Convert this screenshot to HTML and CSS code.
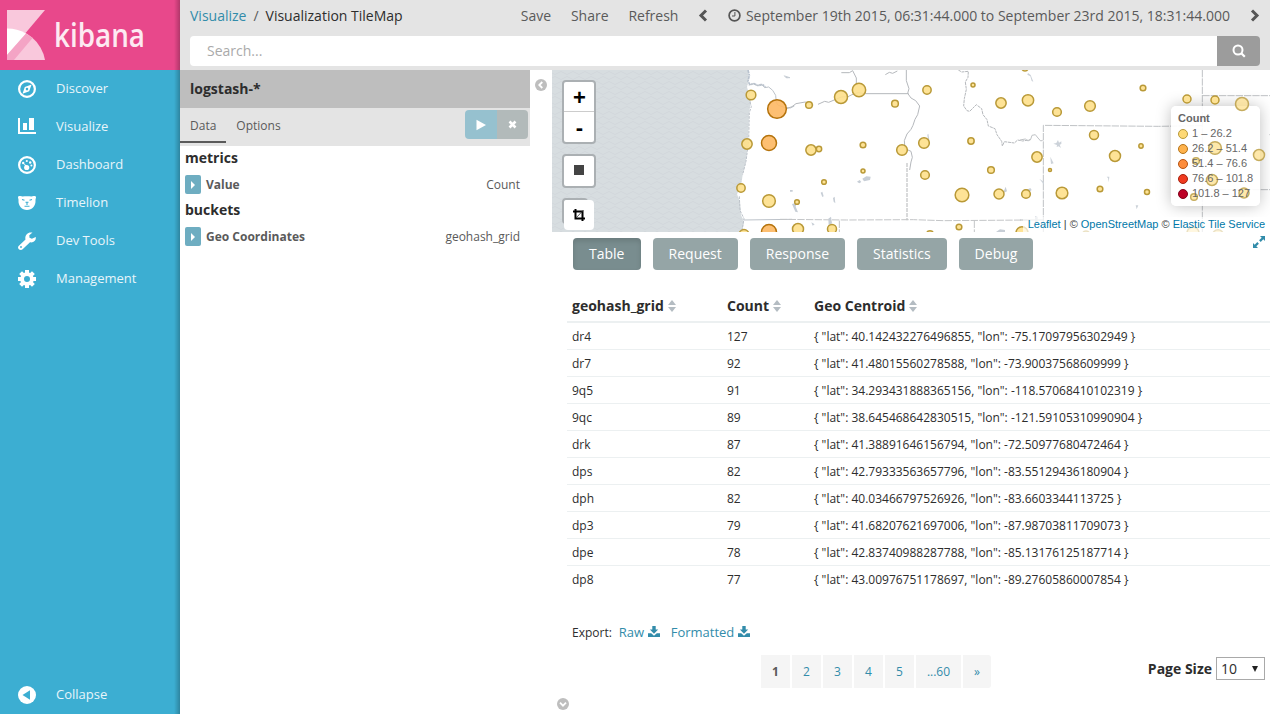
FILE: index.html
```html
<!DOCTYPE html>
<html lang="en">
<head>
<meta charset="utf-8">
<title>Visualization TileMap - Kibana</title>
<link rel="stylesheet" href="styles.css">
</head>
<body>
<div class="app">
  <nav class="sidebar">
    <div class="brand">
      <svg width="180" height="70" viewBox="0 0 180 70">
        <path d="M7 10H45L7 55Z" fill="#f9c8dc"/>
        <path d="M7 28.500a38 38 0 0 1 38 31.500H7Z" fill="#f9c8dc"/>
        <path d="M7 28.500a38 38 0 0 1 19 5L7 55Z" fill="#fff"/>
        <path d="M26 33.500l6.500 4.500L14 60H7v-5Z" fill="#f4a4c5"/>
        <text class="brand-name" x="54" y="46.500" textLength="91" lengthAdjust="spacingAndGlyphs">kibana</text>
      </svg>
    </div>
    <ul class="menu">
      <li><svg width="18" height="18" viewBox="0 0 18 18"><circle cx="9" cy="9" r="7.900" fill="none" stroke="#fff" stroke-width="2.200"/><path fill-rule="evenodd" fill="#fff" d="M13.600 4.500l-2.400 6.700-6.700 2.500 2.300-6.800zM9 7.800a1.300 1.300 0 1 0 .01 2.600A1.300 1.300 0 0 0 9 7.800z"/></svg><span>Discover</span></li>
      <li><svg width="18" height="18" viewBox="0 0 18 18"><path fill="#fff" d="M0 0h2v14h16v2H0zM5 5h4v7H5zM11 0h5v12h-5z"/></svg><span>Visualize</span></li>
      <li><svg width="18" height="18" viewBox="0 0 18 18"><circle cx="9" cy="9" r="7.900" fill="none" stroke="#fff" stroke-width="2.200"/><g fill="#fff"><circle cx="8.700" cy="11.500" r="2.600"/><circle cx="5.200" cy="7" r="1.200"/><circle cx="8.800" cy="5" r="1.100"/><circle cx="12.200" cy="6.500" r="1.200"/><circle cx="13.400" cy="9.600" r="1"/><path d="M5 6.500l4.500 4-1.500 1z"/></g></svg><span>Dashboard</span></li>
      <li><svg width="18" height="18" viewBox="0 0 18 18"><path fill="#fff" d="M0 3C0 1.700 3.500 1.600 4.500 2.600 7 2.200 11 2.200 13.500 2.600 14.500 1.600 18 1.700 18 3c0 1.300-.5 2-.5 3 .5 6-3.500 10-8.500 10S0 12 .5 6C.5 5 0 4.300 0 3z"/><path d="M4 5.500l2.500.7M14 5.500l-2.500.7M7.500 8.300h3M9 8.500v2.500M6.500 12.300h5" fill="none" stroke="#3caed2" stroke-width="1.100"/></svg><span>Timelion</span></li>
      <li><svg width="18" height="18" viewBox="0 0 18 18"><path fill="#fff" fill-rule="evenodd" d="M14.500.6L11.300 3.200l.2 2.500 2.400 1L17.700 5c.8 3-1.700 6-5.700 5.300L4.900 17.100c-1.600 1.700-4.400.8-4.800-1.100-.2-1 .1-1.700.8-2.300L7.500 7.500C6.500 3.500 9.500-.5 14.500.6zM3 14.100a.9.9 0 1 0 .01 1.800A.9.9 0 0 0 3 14.100z"/></svg><span>Dev Tools</span></li>
      <li><svg width="18" height="18" viewBox="0 0 18 18"><g stroke="#fff" stroke-width="4"><path d="M9 0v4M9 14v4M0 9h4M14 9h4M2.600 2.600l2.900 2.900M12.500 12.500l2.900 2.900M15.400 2.600l-2.900 2.900M5.500 12.500l-2.900 2.900"/></g><circle cx="9" cy="9" r="4.900" fill="none" stroke="#fff" stroke-width="3.800"/></svg><span>Management</span></li>
    </ul>
    <div class="collapse"><svg width="18" height="18" viewBox="0 0 18 18"><circle cx="9" cy="9" r="9" fill="#fff"/><path d="M4.500 9L12 4.300v9.400z" fill="#3caed2"/></svg><span>Collapse</span></div>
  </nav>

  <main class="main">
    <header class="topbar">
      <div class="topline">
        <div class="crumbs"><a>Visualize</a><i>/</i><b>Visualization TileMap</b></div>
        <div class="actions"><span>Save</span><span>Share</span><span>Refresh</span></div>
        <svg class="prev" width="10" height="13" viewBox="0 0 10 13"><path d="M8 1.500L3 6.500l5 5" fill="none" stroke="#555" stroke-width="3"/></svg>
        <svg class="clock" width="13" height="13" viewBox="0 0 13 13"><circle cx="6.500" cy="6.500" r="5.400" fill="none" stroke="#555" stroke-width="1.700"/><path d="M6.900 3v4H4" fill="none" stroke="#555"/></svg>
        <span class="range">September 19th 2015, 06:31:44.000 to September 23rd 2015, 18:31:44.000</span>
        <svg class="next" width="10" height="13" viewBox="0 0 10 13"><path d="M2 1.500l5 5-5 5" fill="none" stroke="#555" stroke-width="3"/></svg>
      </div>
      <div class="search"><div class="search-box">Search...</div><div class="search-btn"><svg width="14" height="14" viewBox="0 0 14 14"><circle cx="6" cy="6" r="4.500" fill="none" stroke="#fff" stroke-width="2"/><path d="M9 9l3.800 3.800" stroke="#fff" stroke-width="2.200"/></svg></div></div>
    </header>

    <div class="content">
      <aside class="config">
        <div class="index-name">logstash-*</div>
        <div class="tabs">
          <span class="tab active">Data</span><span class="tab">Options</span>
          <div class="apply"><span class="go"><svg width="10" height="12" viewBox="0 0 10 12"><path d="M.5.700v10.600L10 6z" fill="#fff"/></svg></span><span class="cancel"><svg width="9" height="9" viewBox="0 0 9 9"><path d="M1.500 1.500l6 6M7.500 1.500l-6 6" stroke="#fff" stroke-width="2.600"/></svg></span></div>
        </div>
        <h2>metrics</h2>
        <div class="agg"><i class="toggle"><svg width="4" height="8" viewBox="0 0 4 8"><path d="M0 0v8l4-4z" fill="#fff"/></svg></i><b>Value</b><span>Count</span></div>
        <h2>buckets</h2>
        <div class="agg"><i class="toggle"><svg width="4" height="8" viewBox="0 0 4 8"><path d="M0 0v8l4-4z" fill="#fff"/></svg></i><b>Geo Coordinates</b><span>geohash_grid</span></div>
      </aside>
      <div class="gutter"><svg width="12" height="12" viewBox="0 0 12 12"><circle cx="6" cy="6" r="6" fill="#bebebe"/><path d="M7.300 3L4.300 6l3 3" fill="none" stroke="#fff" stroke-width="1.800"/></svg></div>

      <section class="vis">
        <div class="map">
          <svg class="tiles" width="718" height="162" viewBox="0 0 718 162">
            <defs><pattern id="waves" width="12" height="10" patternUnits="userSpaceOnUse"><path d="M0 3q3 3 6 0t6 0M-6 8q3 3 6 0t6 0 6 0" fill="none" stroke="#d0d6da" stroke-width=".8"/></pattern></defs>
            <path d="M0 0h196l1 8-2 9 4 14-2 12-1 30-2 18-3 12-2 12-4 9 3 8 1 13 3 7-2 10H0z" fill="#d7dde0"/>
            <path d="M0 0h196l1 8-2 9 4 14-2 12-1 30-2 18-3 12-2 12-4 9 3 8 1 13 3 7-2 10H0z" fill="url(#waves)"/>
            <g transform="translate(0 -2) scale(.333333)" fill="none" stroke="#bcc2c9" stroke-width="3">
              <path d="M588 6l4 16-4 18 6 10 12-3 14 6 12-4 8 8" stroke="#b8c2ce" stroke-width="5" stroke-dasharray="10 2 5 2"/>
              <path d="M594 70l-4 18 8 28-6 18-2 86-8 60-10 40M562 385l2 42 12 25-6 36" stroke-dasharray="8 3"/>
              <path d="M590 51l14-4 12 6 12-5 10 11 12-2 12 10 9 15 2 22 6 8 18 6 18 2 12-6M575 456l145-2M697 23l5 6h12"/>
            </g>
            <g transform="translate(228 -2) scale(.333333)" fill="none" stroke="#b5b8bc" stroke-width="3">
              <path d="M20 122l16-6 12-9 28-5 12 7 12 2M114 109l20-9 12 3 38-16 20-1 12-6 18-6 22 3h130M184 14h24l10-6 11 22v20M316 20l12-7 10 3 14-7M379 6v32l8 24-4 14 10 14 14 8 12 16-6 26-8 14-6 18-6 12-12 14-8 20 2 24 18 8 4 18-4 14-4 24"/>
              <path d="M381 285v172" stroke="#c6c8ca" stroke-width="4" stroke-dasharray="12 3"/>
              <path d="M0 454l200 2 200-1 90 3 260-2M178 458v38M583 458v38" stroke="#c3c5c7" stroke-dasharray="22 4"/>
              <path d="M535 6l10 6 20-2-1 18-8 14 3 22-6 28-2 22 10 14 8 2 20-20 16 12 4 18 12 15 4 19 20 8 6 18 14 20 2 14 6-13 30 4 10-9 15 3 24-4" stroke-dasharray="9 2"/>
              <g fill="#c7ced6" stroke="none"><path d="M247 332l12-7 13 1-2 10-18 4zM231 341l8-5 5 6-6 4zM159 390l5-4 2 20-5-5zM122 374l5-3 4 14-4 2zM36 408l14-4-3 12 7 17-8-2zM145 452l8-6 3 20-10 6zM30 366h8v5h-8zM669 376l8-20 4 14zM442 200l3-3 3 20h-4zM94 463l10 6-6 4zM648 492l12-8 15 2v6zM12 22l18 6-8 3z"/></g>
            </g>
            <g transform="translate(468 -2) scale(.333333)" fill="none" stroke="#bfc2c5" stroke-width="3">
              <path d="M70 492V172l345 3 132-2M547 6v486M547 83h203M547 365h203M0 456h70M748 200h2" stroke-dasharray="22 3"/>
              <path d="M0 216l16-3 8 6 8-5 4-12 10-2 8 10 8 9 6-2"/>
              <g fill="#ccd2d9" stroke="none"><path d="M24 15l8 6 8 20-5-2-4-14-9-5zM100 227l9-2 5-9 3 8 7-4v8l-5 2 4 10-7-5-6 2 1-6zM91 266l6 12 4 8-8 2zM58 332l14 10v8zM260 326h8l-2 17-2-13zM347 412h8l-5 12zM45 445l8 2v20l-8-5zM19 366l12-6 4 6-10 9z"/></g>
            </g>
          </svg>
          <div class="legend-back"></div>
          <svg class="markers" width="718" height="162" viewBox="0 0 718 162">
            <g transform="translate(0 -2) scale(.333333)">
              <circle cx="597" cy="81" r="14.500"/><circle cx="585" cy="228" r="15.500"/><circle cx="567" cy="360" r="12.500"/><circle cx="651" cy="399" r="19"/><circle cx="576" cy="499" r="14.500"/>
              <circle class="warm" cx="675" cy="123" r="28"/><circle class="warm" cx="651" cy="225" r="22.500"/><circle class="warm" cx="651" cy="492" r="22.500"/>
            </g>
            <g transform="translate(228 -2) scale(.333333)">
              <circle cx="87" cy="111" r="10"/><circle cx="183" cy="87" r="19.500"/><circle cx="237" cy="66" r="20"/><circle cx="345" cy="107" r="10"/><circle cx="441" cy="66" r="12.500"/><circle cx="579" cy="51" r="6"/><circle cx="663" cy="105" r="15.500"/><circle cx="744" cy="97" r="17"/>
              <circle cx="93" cy="246" r="15.500"/><circle cx="117" cy="243" r="8"/><circle cx="249" cy="231" r="8.500"/><circle cx="366" cy="246" r="16"/><circle cx="432" cy="225" r="16"/><circle cx="573" cy="219" r="9.500"/><circle cx="249" cy="309" r="6"/><circle cx="435" cy="321" r="13"/><circle cx="132" cy="342" r="7"/><circle cx="633" cy="306" r="10"/>
              <circle cx="51" cy="402" r="7"/><circle cx="546" cy="381" r="20.500"/><circle cx="657" cy="378" r="15"/><circle cx="738" cy="378" r="13"/><circle cx="54" cy="483" r="16.500"/><circle cx="156" cy="483" r="13.500"/><circle cx="537" cy="477" r="8.500"/><circle cx="450" cy="498" r="10"/><circle cx="726" cy="494" r="18"/><circle cx="735" cy="0" r="9"/>
            </g>
            <g transform="translate(468 -2) scale(.333333)">
              <circle cx="111" cy="132" r="13"/><circle cx="210" cy="114" r="16"/><circle cx="369" cy="60" r="8.500"/><circle cx="501" cy="93" r="12"/><circle cx="585" cy="96" r="12"/><circle class="dim" cx="666" cy="108" r="19.500"/><circle cx="222" cy="201" r="13.500"/><circle cx="51" cy="267" r="15.500"/><circle cx="285" cy="264" r="16.500"/><circle cx="363" cy="234" r="6.500"/><circle cx="90" cy="306" r="4.500"/><circle cx="126" cy="375" r="17.500"/><circle cx="240" cy="363" r="8.500"/><circle cx="381" cy="372" r="7.500"/>
              <circle class="dim" cx="585" cy="240" r="19"/><circle class="dim" cx="528" cy="279" r="10"/><circle class="dim" cx="717" cy="261" r="16.500"/><circle class="dim" cx="576" cy="336" r="16.500"/><circle class="dim" cx="522" cy="387" r="10"/><circle class="dim" cx="672" cy="375" r="15"/><circle cx="519" cy="495" r="18"/><circle cx="594" cy="501" r="16"/><circle cx="198" cy="499" r="10"/>
            </g>
          </svg>
          <div class="legend">
            <b>Count</b>
            <div><i class="dot c1"></i>1 – 26.2</div>
            <div><i class="dot c2"></i>26.2 – 51.4</div>
            <div><i class="dot c3"></i>51.4 – 76.6</div>
            <div><i class="dot c4"></i>76.6 – 101.8</div>
            <div><i class="dot c5"></i>101.8 – 127</div>
          </div>
          <div class="controls">
            <div class="control zoomer"><span>+</span><span>-</span></div>
            <div class="control"><i class="square"></i></div>
            <div class="control clipped"><span><svg width="12" height="12" viewBox="0 0 12 12"><path d="M2.500 0v9.500H12M0 2.500h9.500V12" fill="none" stroke="#000" stroke-width="2"/><path d="M3 9l7.500-8" stroke="#333" stroke-width=".8"/></svg></span></div>
          </div>
          <div class="attribution"><a>Leaflet</a> | © <a>OpenStreetMap</a> © <a>Elastic Tile Service</a></div>
        </div>

        <div class="spy">
          <div class="modes"><span class="on">Table</span><span>Request</span><span>Response</span><span>Statistics</span><span>Debug</span></div>
          <svg class="expand" width="12" height="12" viewBox="0 0 12 12"><path d="M7 0h5v5l-1.700-1.700L7.700 5.900 6.100 4.300l2.600-2.600zM5 12H0V7l1.700 1.700 2.600-2.600 1.600 1.600-2.600 2.600z" fill="#328caa"/></svg>
        </div>

        <table class="grid">
          <colgroup><col class="w1"><col class="w2"><col></colgroup>
          <thead><tr><th>geohash_grid<i class="sort"></i></th><th>Count<i class="sort"></i></th><th>Geo Centroid<i class="sort"></i></th></tr></thead>
          <tbody>
            <tr><td>dr4</td><td>127</td><td>{ "lat": 40.142432276496855, "lon": -75.17097956302949 }</td></tr>
            <tr><td>dr7</td><td>92</td><td>{ "lat": 41.48015560278588, "lon": -73.90037568609999 }</td></tr>
            <tr><td>9q5</td><td>91</td><td>{ "lat": 34.293431888365156, "lon": -118.57068410102319 }</td></tr>
            <tr><td>9qc</td><td>89</td><td>{ "lat": 38.645468642830515, "lon": -121.59105310990904 }</td></tr>
            <tr><td>drk</td><td>87</td><td>{ "lat": 41.38891646156794, "lon": -72.50977680472464 }</td></tr>
            <tr><td>dps</td><td>82</td><td>{ "lat": 42.79333563657796, "lon": -83.55129436180904 }</td></tr>
            <tr><td>dph</td><td>82</td><td>{ "lat": 40.03466797526926, "lon": -83.6603344113725 }</td></tr>
            <tr><td>dp3</td><td>79</td><td>{ "lat": 41.68207621697006, "lon": -87.98703811709073 }</td></tr>
            <tr><td>dpe</td><td>78</td><td>{ "lat": 42.83740988287788, "lon": -85.13176125187714 }</td></tr>
            <tr><td>dp8</td><td>77</td><td>{ "lat": 43.00976751178697, "lon": -89.27605860007854 }</td></tr>
          </tbody>
        </table>

        <div class="export">Export:
          <a>Raw<svg width="12" height="12" viewBox="0 0 12 12"><path fill="#328caa" d="M4.300 0h3.400v3.500H10.200L6 7.700 1.800 3.500h2.500zM0 7.200h3.200L6 9.800l2.800-2.600H12V11H0z"/></svg></a>
          <a>Formatted<svg width="12" height="12" viewBox="0 0 12 12"><path fill="#328caa" d="M4.300 0h3.400v3.500H10.200L6 7.700 1.800 3.500h2.500zM0 7.200h3.200L6 9.800l2.800-2.600H12V11H0z"/></svg></a>
        </div>

        <div class="pager">
          <div class="pages"><b>1</b><a>2</a><a>3</a><a>4</a><a>5</a><a class="wide">...60</a><a class="last">»</a></div>
          <div class="size"><b>Page Size</b><div class="select"><span>10</span><svg width="6" height="6" viewBox="0 0 6 6"><path d="M0 0h6L3 6z" fill="#222"/></svg></div></div>
        </div>
        <div class="bottom"><svg width="12" height="12" viewBox="0 0 12 12"><circle cx="6" cy="6" r="6" fill="#bebebe"/><path d="M3 4.700l3 3 3-3" fill="none" stroke="#fff" stroke-width="1.800"/></svg></div>
      </section>
    </div>
  </main>
</div>
</body>
</html>
```

FILE: styles.css
```css
* { box-sizing: border-box; }
body { margin: 0; font: 13px/18px "Open Sans", sans-serif; color: #2d2d2d; background: #fff; }
svg { display: block; flex: none; }
a { color: #328caa; }
i { font-style: normal; }
.app { display: flex; width: 1270px; height: 714px; overflow: hidden; }

.sidebar { width: 180px; flex: none; display: flex; flex-direction: column; background: #3caed2; color: #e8f5fa; position: relative; }
.sidebar::after { content: ""; position: absolute; right: 0; top: 0; bottom: 0; width: 6px; background: linear-gradient(to right, rgba(0,0,0,0), rgba(0,0,0,.24)); }
.brand { height: 70px; background: #e8488b; }
.brand-name { font: 600 32px "Open Sans", sans-serif; fill: #fdeaf2; }
.menu { list-style: none; margin: 0; padding: 0; flex: 1; }
.menu li, .collapse { display: flex; align-items: center; gap: 20px; height: 38px; padding: 0 0 2px 18px; }
.menu span, .collapse span { margin-top: -1px; }
.menu svg, .collapse svg { margin-top: 1px; }
.collapse { height: 39px; padding-bottom: 0; }

.main { flex: 1; min-width: 0; display: flex; flex-direction: column; }
.topbar { height: 70px; background: #e4e4e4; padding: 0 10px; color: #5a5a5a; }
.topline { height: 36px; padding-bottom: 5px; display: flex; align-items: center; font-size: 14px; white-space: nowrap; }
.crumbs { width: 331px; flex: none; display: flex; }
.crumbs i { margin: 0 7px; }
.crumbs b { font-weight: 400; color: #2d2d2d; }
.actions { display: flex; gap: 20px; }
.actions span { margin-left: -.2px; }
.prev { margin-left: 20px; }
.clock { margin: 0 4.500px 0 20px; }
.next { margin: 0 0 0 20px; }
.search { display: flex; height: 30px; }
.search-box { flex: 1; background: #fff; border-radius: 4px 0 0 4px; font-size: 14px; line-height: 30px; padding-left: 17px; color: #aaa; }
.search-btn { width: 43px; background: #9c9c9c; border-radius: 0 4px 4px 0; display: flex; align-items: center; justify-content: center; }

.content { flex: 1; display: flex; min-height: 0; }
.config { width: 350px; flex: none; }
.index-name { height: 38px; background: #bebebe; padding-left: 10px; font: 700 14px/37px "Open Sans", sans-serif; }
.tabs { height: 38px; background: #e4e4e4; display: flex; font-size: 12px; color: #5a5a5a; padding-right: 2px; }
.tab { height: 35px; line-height: 35px; padding: 0 10px; }
.tab.active { border-bottom: 2px solid #5a5a5a; }
.apply { margin: 2px 0 0 auto; display: flex; height: 29px; border-radius: 4px; overflow: hidden; }
.go, .cancel { display: flex; align-items: center; justify-content: center; width: 32px; background: #96c1cf; }
.cancel { width: 31px; background: #b2baba; }
.config h2 { margin: 0; padding: 2px 5px 0; height: 26px; font-size: 14px; line-height: 20px; }
.agg { display: flex; align-items: center; height: 26px; padding: 0 10px 0 5px; font-size: 12px; color: #5a5a5a; }
.agg span { margin-left: auto; }
.toggle { width: 16px; height: 19px; background: #6eadc1; border-radius: 2px; margin: -1px 5px 0 0; display: flex; align-items: center; justify-content: center; }
.gutter { width: 22px; flex: none; padding: 9px 5px; }

.vis { flex: 1; min-width: 0; display: flex; flex-direction: column; }
.map { position: relative; height: 162px; flex: none; overflow: hidden; }
.markers { position: absolute; left: 0; top: 0; }
.markers circle { fill: #fee08b; fill-opacity: .9; stroke: #b99937; stroke-width: 4.500px; }
.markers .warm { fill: #fdb863; stroke: #b5730c; }
.markers .dim { opacity: .8; }
.legend, .legend-back { position: absolute; left: 619px; top: 36px; width: 89px; height: 100px; }
.legend-back { border-radius: 5px; background: rgba(255,255,255,.9); box-shadow: 0 0 15px rgba(0,0,0,.25); }
.legend { padding: 5px 7px; font: 11px/15px "Liberation Sans", Arial, sans-serif; color: #666; white-space: nowrap; }
.legend b { display: block; }
.legend div { display: flex; align-items: center; }
.dot { width: 10px; height: 10px; flex: none; border-radius: 50%; border: 1px solid; margin-right: 4px; }
.c1 { background: #fed976; border-color: #b99937; }
.c2 { background: #feb24c; border-color: #b57318; }
.c3 { background: #fd8d3c; border-color: #b65311; }
.c4 { background: #f03b20; border-color: #a5200d; }
.c5 { background: #bd0026; border-color: #80001a; }
.controls { position: absolute; left: 10px; top: 10px; display: flex; flex-direction: column; gap: 10px; }
.control { width: 34px; height: 34px; border: 2px solid #abb0b3; border-radius: 4px; background: #fff; display: flex; flex-direction: column; align-items: center; justify-content: center; }
.zoomer { height: 64px; font: 700 22px/31px "Liberation Sans", Arial, sans-serif; color: #000; }
.zoomer span { width: 30px; height: 30px; padding-left: 1px; text-align: center; }
.zoomer span:first-child { border-bottom: 1px solid #ccc; }
.square { width: 10px; height: 10px; background: #444; margin-bottom: 2px; }
.clipped { width: 26px; height: 26px; align-items: flex-start; justify-content: flex-start; }
.clipped span { width: 30px; height: 30px; flex: none; background: #fff; border-radius: 4px; display: flex; align-items: center; justify-content: center; }
.attribution { position: absolute; right: 0; bottom: 0; padding: 0 5px; background: rgba(255,255,255,.7); font: 11px/15px "Liberation Sans", Arial, sans-serif; color: #444; white-space: nowrap; }
.attribution a { color: #0078a8; }

.spy { height: 56px; flex: none; display: flex; justify-content: space-between; padding: 6px 5px 0 21px; }
.expand { margin-top: -2px; }
.modes { display: flex; gap: 12px; }
.modes span { height: 32px; padding: 0 16px; border-radius: 4px; background: #95a5a6; color: #fff; font-size: 14px; line-height: 32px; }
.modes .on { width: 67.600px; background: #798d8f; box-shadow: inset 0 3px 5px rgba(0,0,0,.125); }

.grid { width: 703px; margin-left: 15px; border-collapse: separate; border-spacing: 0; table-layout: fixed; flex: none; }
.w1 { width: 155px; }
.w2 { width: 87px; }
.grid th { height: 35px; padding: 3px 5px 0; text-align: left; font-size: 14px; line-height: 20px; border-bottom: 2px solid #ecf0f1; white-space: nowrap; }
.grid td { height: 27px; padding: 0 5px; font-size: 12px; line-height: 17px; border-bottom: 1px solid #ecf0f1; white-space: nowrap; }
.grid tbody tr:last-child td { border-bottom-color: transparent; }
.sort { display: inline-grid; gap: 2px; margin-left: 4px; vertical-align: 6px; }
.sort::before, .sort::after { content: ""; border: 4px solid transparent; border-top: 0; border-bottom: 5px solid #b4bcc2; }
.sort::after { border-bottom: 0; border-top: 5px solid #b4bcc2; }

.export { display: flex; height: 18px; margin: 30px 0 0 20px; font-size: 12px; line-height: 19px; }
.export a { display: flex; align-items: center; gap: 4px; font-size: 13px; line-height: 18px; margin-left: 7px; }
.export a + a { margin-left: 10.500px; }
.pager { display: flex; height: 33px; margin-top: 14px; padding-left: 209px; justify-content: space-between; }
.pages { display: flex; gap: 2px; font-size: 12px; line-height: 33px; text-align: center; color: #5a5a5a; }
.pages > * { width: 29px; background: #f5f5f5; }
.pages .wide { width: 45px; }
.pages .last { width: 28px; border-radius: 0 3px 3px 0; }
.size { display: flex; gap: 4px; padding-right: 5px; margin-top: 2px; font-size: 14px; line-height: 23px; }
.select { width: 49px; height: 23px; border: 1px solid #a9a9a9; display: flex; align-items: center; justify-content: space-between; padding: 0 6px 0 4px; }
.bottom { padding: 10px 0 0 5px; }
```
